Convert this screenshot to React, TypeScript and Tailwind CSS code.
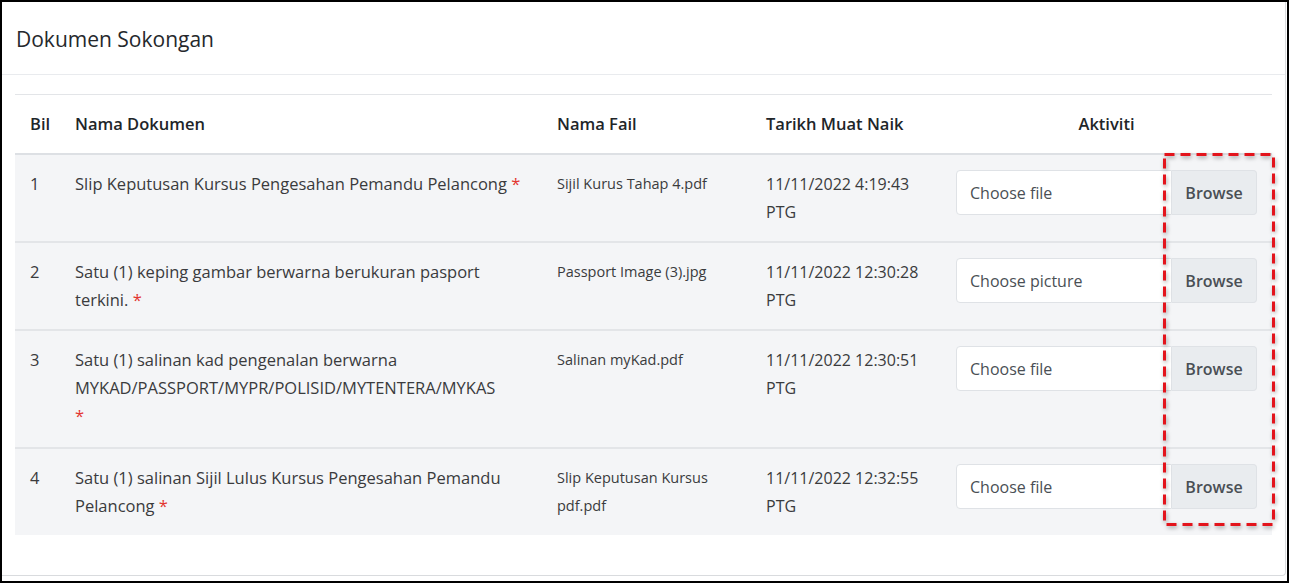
const rows = [
  {
    bil: "1",
    nama: "Slip Keputusan Kursus Pengesahan Pemandu Pelancong",
    fail: "Sijil Kurus Tahap 4.pdf",
    tarikh: "11/11/2022 4:19:43 PTG",
    placeholder: "Choose file",
    starOwnLine: false,
  },
  {
    bil: "2",
    nama: "Satu (1) keping gambar berwarna berukuran pasport terkini.",
    fail: "Passport Image (3).jpg",
    tarikh: "11/11/2022 12:30:28 PTG",
    placeholder: "Choose picture",
    starOwnLine: false,
  },
  {
    bil: "3",
    nama: "Satu (1) salinan kad pengenalan berwarna MYKAD/PASSPORT/MYPR/POLISID/MYTENTERA/MYKAS",
    fail: "Salinan myKad.pdf",
    tarikh: "11/11/2022 12:30:51 PTG",
    placeholder: "Choose file",
    starOwnLine: true,
  },
  {
    bil: "4",
    nama: "Satu (1) salinan Sijil Lulus Kursus Pengesahan Pemandu Pelancong",
    fail: "Slip Keputusan Kursus pdf.pdf",
    tarikh: "11/11/2022 12:32:55 PTG",
    placeholder: "Choose file",
    starOwnLine: false,
  },
];

const App = () => {
  return (
    <div className="relative h-[583px] border-2 border-black bg-white font-['Open_Sans',sans-serif] text-[#3a3b3d]">
      <div className="mr-px flex h-[574px] flex-col rounded-br border-r border-b border-[#d9dbde]">
        <div className="border-b border-[#e9ebee] px-[14px] pt-[23px] pb-[20px] text-[21px] leading-[29px] text-[#25282c]">
          Dokumen Sokongan
        </div>

        <div className="px-[13px] pt-[19px]">
          <table className="w-full table-fixed border-collapse border-t border-[#e3e5e8] text-[16.5px]">
            <colgroup>
              <col className="w-[45px]" />
              <col className="w-[482px]" />
              <col className="w-[209px]" />
              <col className="w-[190px]" />
              <col />
            </colgroup>
            <thead>
              <tr className="border-b-2 border-[#dde0e4] text-[#212529]">
                <th className="px-[15px] pt-[15px] pb-[15px] text-left font-semibold leading-[28px]">Bil</th>
                <th className="px-[15px] pt-[15px] pb-[15px] text-left font-semibold leading-[28px]">Nama Dokumen</th>
                <th className="px-[15px] pt-[15px] pb-[15px] text-left font-semibold leading-[28px]">Nama Fail</th>
                <th className="px-[15px] pt-[15px] pb-[15px] text-left font-semibold leading-[28px]">Tarikh Muat Naik</th>
                <th className="px-[15px] pt-[15px] pb-[15px] text-center font-semibold leading-[28px]">Aktiviti</th>
              </tr>
            </thead>
            <tbody>
              {rows.map((row) => (
                <tr key={row.bil} className="border-b-2 border-[#e3e5e8] bg-[#f4f5f7] last:border-b-0">
                  <td className="px-[15px] py-[15px] align-top leading-[28px]">{row.bil}</td>
                  <td className="px-[15px] py-[15px] align-top leading-[28px]">
                    {row.nama}{" "}
                    <span className={row.starOwnLine ? "block pb-[2px] text-[#e3342f]" : "text-[#e3342f]"}>*</span>
                  </td>
                  <td className="px-[15px] py-[15px] align-top text-[14.5px] leading-[28px]">{row.fail}</td>
                  <td className="px-[15px] py-[15px] align-top text-[16px] leading-[28px]">{row.tarikh}</td>
                  <td className="px-[15px] pt-[15px] pb-[15px] align-top">
                    <div className="flex h-[45px] text-[16px]">
                      <div className="flex flex-1 items-center rounded-l border border-[#dfe2e6] bg-white px-[13px] font-medium text-[#4a4f55]">
                        {row.placeholder}
                      </div>
                      <button className="w-[85px] rounded-r border border-l-0 border-[#dfe2e6] bg-[#e9ecef] font-semibold text-[#4a4f55]">
                        Browse
                      </button>
                    </div>
                  </td>
                </tr>
              ))}
            </tbody>
          </table>
        </div>
      </div>

      {/* annotation box around the Browse buttons */}
      <svg
        className="absolute left-[1161px] top-[151px] drop-shadow-[1px_2px_2px_rgba(0,0,0,0.35)]"
        width="112"
        height="373"
        viewBox="0 0 112 373"
      >
        <rect
          x="1.5"
          y="1.5"
          width="109"
          height="370"
          fill="none"
          stroke="#e3141c"
          strokeWidth="3"
          strokeDasharray="10 6"
        />
      </svg>
    </div>
  );
};

export default App;
